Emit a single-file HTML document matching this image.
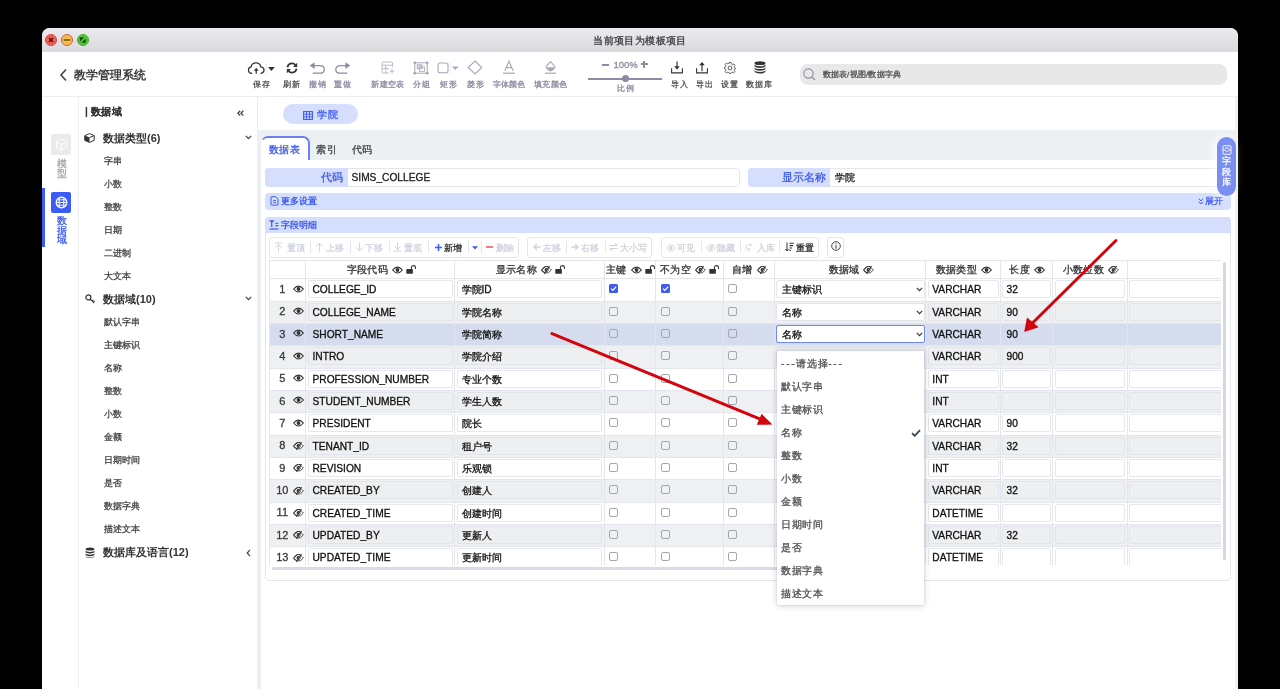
<!DOCTYPE html>
<html><head><meta charset="utf-8">
<style>
*{box-sizing:border-box;margin:0;padding:0}
html,body{width:1280px;height:689px;overflow:hidden;background:#000;font-family:"Liberation Sans",sans-serif;color:#333}
#P div{-webkit-text-stroke:0.3px currentColor}
#P div.navh,#P div[style*="bold"]{-webkit-text-stroke:0}
.a{position:absolute;white-space:nowrap}
#win{position:absolute;left:42px;top:28px;width:1196px;height:700px;background:#fff;border-radius:8px 8px 0 0;overflow:hidden}
#P{position:absolute;left:0;top:0;width:1280px;height:689px;overflow:hidden;will-change:transform}
.tl{position:absolute;top:34px;width:12px;height:12px;border-radius:50%}
.tbi{position:absolute;top:60px;width:16px;height:14px}
.tbl{position:absolute;top:79px;font-size:8px;letter-spacing:1px;padding-left:1px;line-height:10px;color:#8e8aa3;text-align:center;white-space:nowrap}
.nav{position:absolute;left:104px;font-size:9px;color:#444;line-height:12px;white-space:nowrap}
.navh{position:absolute;left:103px;font-size:11px;font-weight:bold;color:#333;line-height:14px;white-space:nowrap}
</style></head><body>
<div id="win"></div>
<div id="P">
  <!-- title bar -->
  <div class="a" style="left:42px;top:28px;width:1196px;height:24px;border-radius:8px 8px 0 0;background:linear-gradient(#eaeaef,#d9d9de)"></div>
  <div class="tl" style="left:45px;background:#ee5f58;border:1px solid #d9473f"></div>
  <div class="tl" style="left:61px;background:#f5bd4f;border:1px solid #e15b3f"></div>
  <div class="tl" style="left:76.5px;background:#55c43c;border:1px solid #3fae2e"></div>
  <div class="a" style="left:42px;width:1196px;top:33.5px;text-align:center;font-size:10px;letter-spacing:0.35px;color:#3a3a3a;line-height:14px">当前项目为模板项目</div>

  <!-- header -->
  <div class="a" style="left:42px;top:96px;width:1196px;height:1px;background:#eeeef2"></div>
  <svg class="a" style="left:59px;top:68px" width="9" height="14" viewBox="0 0 9 14"><path d="M7 1.5 L2 7 L7 12.5" fill="none" stroke="#444" stroke-width="1.6"/></svg>
  <div class="a" style="left:74px;top:67.5px;font-size:11.8px;font-weight:bold;color:#3d3d3d;line-height:15px">教学管理系统</div>


  <!-- toolbar -->
  <svg class="a" style="left:247px;top:60.6px" width="30" height="15" viewBox="0 0 30 15">
    <path d="M4.8 12.3 C2.6 12.1 1.5 10.5 1.5 8.9 C1.5 7.3 2.6 6.1 4.1 5.9 C4.5 3.4 6.6 1.9 9 1.9 C11.5 1.9 13.4 3.6 13.8 5.9 C15.8 6.1 17 7.5 17 9.1 C17 10.6 15.9 12.1 13.9 12.3" fill="none" stroke="#333" stroke-width="1.25" stroke-linecap="round"/>
    <path d="M9.25 12.7 V8.6" stroke="#333" stroke-width="1.25"/>
    <path d="M6.9 9.7 L9.25 6.8 L11.6 9.7 Z" fill="#333"/>
    <rect x="18.6" y="1.8" width="0.9" height="11.4" fill="#e3e4ee"/>
    <path d="M21 6 H27.8 L24.4 10.1 Z" fill="#333"/>
  </svg>
  <svg class="a" style="left:285px;top:61px" width="14" height="14" viewBox="0 0 14 14">
    <path d="M2.5 6.3 C2.9 3.9 4.7 2.4 7 2.4 C8.5 2.4 9.7 3 10.5 4" fill="none" stroke="#333" stroke-width="1.8"/>
    <path d="M12.2 1.8 V6.1 H7.9 Z" fill="#333"/>
    <path d="M11.5 7.7 C11.1 10.1 9.3 11.6 7 11.6 C5.5 11.6 4.3 11 3.5 10" fill="none" stroke="#333" stroke-width="1.8"/>
    <path d="M1.8 12.2 V7.9 H6.1 Z" fill="#333"/>
  </svg>
  <svg class="a" style="left:309px;top:61px" width="17" height="14" viewBox="0 0 17 14">
    <path d="M2.5 4.6 H10.8 C13.4 4.6 15.2 6.3 15.2 8.4 C15.2 10.5 13.4 12.2 10.8 12.2 H3.7" fill="none" stroke="#8e8aa3" stroke-width="1.3"/>
    <path d="M0.8 4.6 L5.6 1.2 V8 Z" fill="#8e8aa3"/>
  </svg>
  <svg class="a" style="left:334px;top:61px" width="17" height="14" viewBox="0 0 17 14">
    <path d="M14.5 4.6 H6.2 C3.6 4.6 1.8 6.3 1.8 8.4 C1.8 10.5 3.6 12.2 6.2 12.2 H13.3" fill="none" stroke="#8e8aa3" stroke-width="1.3"/>
    <path d="M16.2 4.6 L11.4 1.2 V8 Z" fill="#8e8aa3"/>
  </svg>

  <svg class="a" style="left:381px;top:61px" width="14" height="13" viewBox="0 0 14 13">
    <path d="M11.5 6 V2 C11.5 1.4 11.1 1 10.5 1 H2 C1.4 1 1 1.4 1 2 V11 C1 11.6 1.4 12 2 12 H7.5" fill="none" stroke="#bdbbc8" stroke-width="1"/>
    <path d="M1 4.2 H11.5 M1 7.6 H8 M4.8 4.2 V12" fill="none" stroke="#bdbbc8" stroke-width="1"/>
    <path d="M11 8 V12.6 M8.7 10.3 H13.3" stroke="#bdbbc8" stroke-width="1.1"/>
  </svg>
  <svg class="a" style="left:413px;top:61px" width="16" height="14" viewBox="0 0 16 14">
    <rect x="1.8" y="1.8" width="12.4" height="10.4" fill="none" stroke="#a9a6b8" stroke-width="1"/>
    <circle cx="1.8" cy="1.8" r="1.4" fill="#a9a6b8"/><circle cx="14.2" cy="1.8" r="1.4" fill="#a9a6b8"/><circle cx="1.8" cy="12.2" r="1.4" fill="#a9a6b8"/><circle cx="14.2" cy="12.2" r="1.4" fill="#a9a6b8"/>
    <rect x="4.2" y="3.8" width="5" height="4" fill="#d8d6e0" stroke="#a9a6b8" stroke-width="0.8"/>
    <rect x="6.6" y="6" width="5" height="4.4" fill="none" stroke="#a9a6b8" stroke-width="0.8"/>
  </svg>
  <svg class="a" style="left:437px;top:61px" width="23" height="14" viewBox="0 0 23 14">
    <rect x="1" y="2" width="10" height="9.8" rx="2" fill="none" stroke="#a9a6b8" stroke-width="1.1"/>
    <rect x="12.8" y="1.5" width="0.8" height="11" fill="#e4e4ec"/>
    <path d="M15 5.6 H21.6 L18.3 9 Z" fill="#a9a6b8"/>
  </svg>
  <svg class="a" style="left:467px;top:60px" width="16" height="15" viewBox="0 0 16 15">
    <path d="M8 1 L14.8 7.5 L8 14 L1.2 7.5 Z" fill="none" stroke="#a9a6b8" stroke-width="1.1"/>
  </svg>
  <svg class="a" style="left:502px;top:60px" width="14" height="15" viewBox="0 0 14 15">
    <path d="M2.8 11 L7 1.2 L11.2 11 M4.3 7.6 H9.7" fill="none" stroke="#a9a6b8" stroke-width="1.1"/>
    <rect x="1" y="12.6" width="12" height="1.2" fill="#a9a6b8"/>
  </svg>
  <svg class="a" style="left:544px;top:60px" width="13" height="15" viewBox="0 0 13 15">
    <path d="M6.5 1.5 L10.5 6.2 C11 6.8 11 7.6 10.5 8.2 L8 10.4 C7.2 11 5.8 11 5 10.4 L2.5 8.2 C2 7.6 2 6.8 2.5 6.2 Z" fill="none" stroke="#a9a6b8" stroke-width="1.1"/>
    <path d="M2.3 7.3 H10.7 L8 10.4 C7.2 11 5.8 11 5 10.4 Z" fill="#a9a6b8"/>
    <rect x="1" y="12.6" width="11" height="1.2" fill="#a9a6b8"/>
  </svg>

  <!-- zoom -->
  <div class="a" style="left:602.4px;top:63.6px;width:6.6px;height:2.1px;background:#8e8aa3"></div>
  <div class="a" style="left:613.5px;top:59px;font-size:9.5px;color:#8e8aa3;line-height:11px">100%</div>
  <div class="a" style="left:640.9px;top:63.4px;width:7px;height:2.1px;background:#8e8aa3"></div>
  <div class="a" style="left:643.4px;top:60.9px;width:2.1px;height:7px;background:#8e8aa3"></div>
  <div class="a" style="left:588px;top:78px;width:74px;height:2px;background:#8e8aa3"></div>
  <div class="a" style="left:621.5px;top:75px;width:7px;height:7px;border-radius:50%;background:#8e8aa3"></div>

  <svg class="a" style="left:670px;top:61px" width="14" height="13" viewBox="0 0 14 13">
    <path d="M1.6 7.2 V11.9 H12.4 V7.2" fill="none" stroke="#333" stroke-width="1.1"/>
    <path d="M7 0.6 V7.5" stroke="#333" stroke-width="1.2"/><path d="M4.2 5.2 L7 8.6 L9.8 5.2 Z" fill="#333"/>
  </svg>
  <svg class="a" style="left:695px;top:61px" width="14" height="13" viewBox="0 0 14 13">
    <path d="M1.6 7.2 V11.9 H12.4 V7.2" fill="none" stroke="#333" stroke-width="1.1"/>
    <path d="M7 3.2 V10.2" stroke="#333" stroke-width="1.2"/><path d="M4.2 4.3 L7 0.9 L9.8 4.3 Z" fill="#333"/>
  </svg>
  <svg class="a" style="left:723.5px;top:61.5px" width="12" height="12" viewBox="0 0 12 12">
    <path d="M5 0.6 H7 L7.3 2 L8.5 2.6 L9.8 1.9 L11 3.3 L10.2 4.5 L10.6 5.6 L11.4 6 V6.9 L10.6 7.2 L10.2 8.4 L10.9 9.6 L9.6 10.9 L8.4 10.2 L7.2 10.7 L6.9 11.4 H5.1 L4.8 10.7 L3.6 10.2 L2.4 10.9 L1.1 9.6 L1.8 8.4 L1.4 7.2 L0.6 6.9 V5.1 L1.4 4.8 L1.8 3.6 L1.1 2.4 L2.4 1.1 L3.6 1.8 L4.8 1.4 Z" fill="none" stroke="#444" stroke-width="0.85" stroke-linejoin="round"/>
    <circle cx="6" cy="6" r="1.9" fill="none" stroke="#444" stroke-width="0.85"/>
  </svg>
  <svg class="a" style="left:753.5px;top:61px" width="12" height="13" viewBox="0 0 12 13">
    <ellipse cx="6" cy="2.2" rx="5.5" ry="1.9" fill="#333"/>
    <path d="M0.5 3.6 C0.9 4.6 3.2 5.3 6 5.3 C8.8 5.3 11.1 4.6 11.5 3.6 V5 C11.5 6.1 9 6.9 6 6.9 C3 6.9 0.5 6.1 0.5 5 Z" fill="#333"/>
    <path d="M0.5 6.4 C0.9 7.4 3.2 8.1 6 8.1 C8.8 8.1 11.1 7.4 11.5 6.4 V7.8 C11.5 8.9 9 9.7 6 9.7 C3 9.7 0.5 8.9 0.5 7.8 Z" fill="#333"/>
    <path d="M0.5 9.2 C0.9 10.2 3.2 10.9 6 10.9 C8.8 10.9 11.1 10.2 11.5 9.2 V10.6 C11.5 11.7 9 12.5 6 12.5 C3 12.5 0.5 11.7 0.5 10.6 Z" fill="#333"/>
  </svg>

  <div class="tbl" style="left:241.7px;top:80px;width:40px;color:#555">保存</div>
  <div class="tbl" style="left:271.7px;top:80px;width:40px;color:#555">刷新</div>
  <div class="tbl" style="left:297.0px;top:80px;width:40px">撤销</div>
  <div class="tbl" style="left:322.0px;top:80px;width:40px">重做</div>
  <div class="tbl" style="left:367.8px;top:80px;width:40px;letter-spacing:0.2px;padding-left:0.2px">新建空表</div>
  <div class="tbl" style="left:401.5px;top:80px;width:40px">分组</div>
  <div class="tbl" style="left:428.5px;top:80px;width:40px">矩形</div>
  <div class="tbl" style="left:455.9px;top:80px;width:40px">菱形</div>
  <div class="tbl" style="left:488.9px;top:80px;width:40px;letter-spacing:0.2px;padding-left:0.2px">字体颜色</div>
  <div class="tbl" style="left:530.5px;top:80px;width:40px;letter-spacing:0.2px;padding-left:0.2px">填充颜色</div>
  <div class="tbl" style="left:605.0px;top:83.5px;width:40px">比例</div>
  <div class="tbl" style="left:659.3px;top:79.5px;width:40px;color:#555">导入</div>
  <div class="tbl" style="left:684.5px;top:79.5px;width:40px;color:#555">导出</div>
  <div class="tbl" style="left:709.7px;top:79.5px;width:40px;color:#555">设置</div>
  <div class="tbl" style="left:739.2px;top:79.5px;width:40px;color:#555">数据库</div>
  <!-- search -->
  <div class="a" style="left:800px;top:64px;width:427px;height:21px;border-radius:8px;background:#e8e8e8"></div>
  <svg class="a" style="left:803px;top:68px" width="13" height="13" viewBox="0 0 13 13"><circle cx="5.5" cy="5.5" r="4.6" fill="none" stroke="#8f8aa8" stroke-width="1.1"/><path d="M9 9 L12 12" stroke="#8f8aa8" stroke-width="1.2"/></svg>
  <div class="a" style="left:822.5px;top:69px;font-size:8px;letter-spacing:0.2px;color:#555;line-height:11px">数据表/视图/数据字典</div>

  <!-- left rail -->
  <div class="a" style="left:78px;top:97px;width:1px;height:592px;background:#f0f0f2"></div>
  <div class="a" style="left:51px;top:134px;width:20px;height:21px;border-radius:2px;background:#ebebeb"></div>
  <div class="a" style="left:56.5px;top:159px;width:10px;font-size:9.5px;line-height:9.5px;color:#a3a3a3;white-space:normal;text-align:center">模型</div>
  <div class="a" style="left:42px;top:188px;width:2.5px;height:59px;background:#3b5cf5"></div>
  <div class="a" style="left:51px;top:192px;width:20px;height:21px;border-radius:2px;background:#3b5cf5"></div>
  <div class="a" style="left:56.5px;top:216px;width:10px;font-size:9.5px;line-height:9.5px;color:#3b5cf5;white-space:normal;text-align:center">数据域</div>


  <svg class="a" style="left:84px;top:133px" width="11" height="10" viewBox="0 0 11 10"><path d="M5.5 0.6 L10.2 2.6 V7.4 L5.5 9.4 L0.8 7.4 V2.6 Z" fill="#fff" stroke="#333" stroke-width="1"/><path d="M0.8 2.6 L5.5 4.6 V9.4 L0.8 7.4 Z" fill="#333"/><path d="M5.5 4.6 L10.2 2.6" stroke="#333" stroke-width="1"/></svg>
  <svg class="a" style="left:84.5px;top:294px" width="11" height="10" viewBox="0 0 11 10"><circle cx="3.4" cy="3.4" r="2.5" fill="none" stroke="#333" stroke-width="1.2"/><path d="M5.2 5.2 L9.2 9.2 M7 7 L8.4 5.8 M8.2 8.2 L9.6 7" fill="none" stroke="#333" stroke-width="1.1"/></svg>
  <svg class="a" style="left:84.5px;top:546.5px" width="10" height="11" viewBox="0 0 10 11"><ellipse cx="5" cy="2" rx="4.4" ry="1.6" fill="#333"/><path d="M0.6 3.3 C0.6 4.3 2.6 5 5 5 C7.4 5 9.4 4.3 9.4 3.3 V4.8 C9.4 5.8 7.4 6.5 5 6.5 C2.6 6.5 0.6 5.8 0.6 4.8 Z" fill="#333"/><path d="M0.6 6 C0.6 7 2.6 7.7 5 7.7 C7.4 7.7 9.4 7 9.4 6 V7.5 C9.4 8.5 7.4 9.2 5 9.2 C2.6 9.2 0.6 8.5 0.6 7.5 Z" fill="#333"/><path d="M0.6 8.7 C0.6 9.7 2.6 10.4 5 10.4 C7.4 10.4 9.4 9.7 9.4 8.7 V9.2 C9.4 10.2 7.4 10.9 5 10.9 C2.6 10.9 0.6 10.2 0.6 9.2 Z" fill="#333"/></svg>
  <svg class="a" style="left:244.5px;top:135.3px" width="7" height="5" viewBox="0 0 7 5"><path d="M0.8 0.9 L3.5 3.7 L6.2 0.9" fill="none" stroke="#444" stroke-width="1.25"/></svg>
  <svg class="a" style="left:244.5px;top:296.3px" width="7" height="5" viewBox="0 0 7 5"><path d="M0.8 0.9 L3.5 3.7 L6.2 0.9" fill="none" stroke="#444" stroke-width="1.25"/></svg>
  <svg class="a" style="left:245.5px;top:549px" width="5" height="8" viewBox="0 0 5 8"><path d="M4 0.9 L1.2 4 L4 7.1" fill="none" stroke="#444" stroke-width="1.25"/></svg>
  <svg class="a" style="left:54.5px;top:138px" width="13" height="13" viewBox="0 0 13 13"><path d="M6.5 1 L11.5 3.8 V9.2 L6.5 12 L1.5 9.2 V3.8 Z M1.5 3.8 L6.5 6.6 L11.5 3.8 M6.5 6.6 V12" fill="none" stroke="#fff" stroke-width="1"/></svg>
  <svg class="a" style="left:54.5px;top:196px" width="13" height="13" viewBox="0 0 13 13"><circle cx="6.5" cy="6.5" r="5.3" fill="none" stroke="#fff" stroke-width="1.3"/><ellipse cx="6.5" cy="6.5" rx="2.4" ry="5.3" fill="none" stroke="#fff" stroke-width="1"/><path d="M1.2 6.5 H11.8 M2 3.8 H11 M2 9.2 H11" stroke="#fff" stroke-width="0.9"/></svg>
  <!-- traffic glyphs -->
  <svg class="a" style="left:45px;top:34px" width="44" height="12" viewBox="0 0 44 12">
    <path d="M4 4 L8 8 M8 4 L4 8" stroke="#5a0a06" stroke-width="1.4"/>
    <path d="M18.6 6 H25.4" stroke="#6b4a0a" stroke-width="1.4"/>
    <path d="M34.8 3.3 H39.2 L34.8 7.7 Z M40.7 8.8 H36.3 L40.7 4.4 Z" fill="#0f4d0a"/>
  </svg>

  <!-- nav panel -->
  <div class="a" style="left:257px;top:97px;width:1px;height:592px;background:#ececf0"></div>
  <div class="a" style="left:85px;top:105px;font-size:10px;letter-spacing:0.3px;font-weight:700;-webkit-text-stroke:0.1px #333;color:#333;line-height:14px">| 数据域</div>
  <svg class="a" style="left:236.5px;top:109.5px" width="7" height="7" viewBox="0 0 7 7"><path d="M3.2 0.8 L0.9 3.2 L3.2 5.6 M6.3 0.8 L4 3.2 L6.3 5.6" fill="none" stroke="#444" stroke-width="1.3"/></svg>

  <div class="navh" style="top:131px">数据类型(6)</div>
  <div class="nav" style="top:154.5px">字串</div>
  <div class="nav" style="top:177.5px">小数</div>
  <div class="nav" style="top:200.5px">整数</div>
  <div class="nav" style="top:223.5px">日期</div>
  <div class="nav" style="top:246.5px">二进制</div>
  <div class="nav" style="top:269.5px">大文本</div>
  <div class="navh" style="top:292px">数据域(10)</div>
  <div class="nav" style="top:315.5px">默认字串</div>
  <div class="nav" style="top:338.5px">主键标识</div>
  <div class="nav" style="top:361.5px">名称</div>
  <div class="nav" style="top:384.5px">整数</div>
  <div class="nav" style="top:407.5px">小数</div>
  <div class="nav" style="top:430.5px">金额</div>
  <div class="nav" style="top:453.5px">日期时间</div>
  <div class="nav" style="top:476.5px">是否</div>
  <div class="nav" style="top:499.5px">数据字典</div>
  <div class="nav" style="top:522.5px">描述文本</div>
  <div class="navh" style="top:545px">数据库及语言(12)</div>

<!--MAIN-->
<div class="a" style="left:283px;top:103.5px;width:74.5px;height:20px;border-radius:10px;background:#d5defc"></div>
<svg class="a" style="left:302.5px;top:110.5px" width="10" height="9" viewBox="0 0 10 9"><rect x="0.6" y="0.6" width="8.8" height="7.8" fill="none" stroke="#3d5af1" stroke-width="1.1"/><path d="M0.6 3.2 H9.4 M0.6 5.8 H9.4 M3.5 0.6 V8.4 M6.5 0.6 V8.4" stroke="#3d5af1" stroke-width="0.9"/></svg>
<div class="a" style="left:317px;top:108px;font-size:10px;letter-spacing:0.6px;line-height:13px;color:#3d5af1">学院</div>
<div class="a" style="left:258px;top:130px;width:980px;height:30px;background:#edf0f2"></div>
<div class="a" style="left:257px;top:130px;width:4.2px;height:559px;background:#edf0f2"></div>
<div class="a" style="left:1235.2px;top:97px;width:2.8px;height:592px;background:#f1f2f4"></div>
<div class="a" style="left:261px;top:135.6px;width:48.5px;height:24.5px;background:#fff;border-radius:7px 7px 0 0;border-top:2px solid #6a80f4;border-right:2px solid #6a80f4;border-left:1px solid rgba(106,128,244,0)"></div>
<div class="a" style="left:268.5px;top:143px;font-size:10px;letter-spacing:0.6px;line-height:13px;color:#3d5af1">数据表</div>
<div class="a" style="left:316px;top:143px;font-size:10px;letter-spacing:0.6px;line-height:13px;color:#444">索引</div>
<div class="a" style="left:351.5px;top:143px;font-size:10px;letter-spacing:0.6px;line-height:13px;color:#444">代码</div>
<div class="a" style="left:265px;top:168px;width:475px;height:18.5px;border-radius:4px;border:1px solid #e3e6f0;background:#fff"></div>
<div class="a" style="left:265px;top:168px;width:82.5px;height:18.5px;border-radius:4px 0 0 4px;background:#d5defc"></div>
<div class="a" style="left:265px;top:171px;width:78px;text-align:right;font-size:10.5px;line-height:13px;color:#3d5af1">代码</div>
<div class="a" style="left:351.5px;top:171px;font-size:10.2px;line-height:13px;color:#222">SIMS_COLLEGE</div>
<div class="a" style="left:748px;top:168px;width:483px;height:18.5px;border-radius:4px;border:1px solid #e3e6f0;background:#fff"></div>
<div class="a" style="left:748px;top:168px;width:82px;height:18.5px;border-radius:4px 0 0 4px;background:#d5defc"></div>
<div class="a" style="left:748px;top:171px;width:78px;text-align:right;font-size:10.5px;line-height:13px;color:#3d5af1">显示名称</div>
<div class="a" style="left:834.5px;top:171px;font-size:10px;line-height:13px;color:#222">学院</div>
<div class="a" style="left:265px;top:192.6px;width:966px;height:17.2px;border-radius:4px;background:#d5defc"></div>
<svg class="a" style="left:269.5px;top:196.2px" width="9" height="10" viewBox="0 0 9 10"><path d="M1 1.2 C1 0.9 1.2 0.7 1.5 0.7 H5.6 L8 3.1 V8.6 C8 8.9 7.8 9.1 7.5 9.1 H1.5 C1.2 9.1 1 8.9 1 8.6 Z" fill="none" stroke="#3d5af1" stroke-width="1"/><path d="M3 4.6 H6 M3 6.6 H6" stroke="#3d5af1" stroke-width="0.9"/></svg>
<div class="a" style="left:281px;top:196.3px;font-size:9px;line-height:11px;font-weight:bold;color:#3d5af1">更多设置</div>
<svg class="a" style="left:1198px;top:198px" width="6" height="7" viewBox="0 0 6 7"><path d="M0.8 0.8 L3 2.8 L5.2 0.8 M0.8 3.8 L3 5.8 L5.2 3.8" fill="none" stroke="#3d5af1" stroke-width="1"/></svg>
<div class="a" style="left:1205px;top:196px;font-size:9px;line-height:11px;color:#3d5af1">展开</div>
<div class="a" style="left:265px;top:216.5px;width:966px;height:364px;border-radius:4px;border:1px solid #e4e6ee;background:#fff"></div>
<div class="a" style="left:265px;top:216.5px;width:966px;height:16.5px;border-radius:4px 4px 0 0;background:#d5defc"></div>
<svg class="a" style="left:269px;top:220px" width="10" height="10" viewBox="0 0 10 10"><path d="M0.5 1 H5 M2.75 1 V7" stroke="#3d5af1" stroke-width="1.3"/><path d="M6.2 3.2 H9.5 M6.2 5.6 H9.5" stroke="#3d5af1" stroke-width="1.1"/><path d="M0.5 9 H9.5" stroke="#3d5af1" stroke-width="1.2"/></svg>
<div class="a" style="left:281px;top:219.5px;font-size:9px;line-height:11px;font-weight:bold;color:#3d5af1">字段明细</div>
<div class="a" style="left:269.4px;top:237.3px;width:250.1px;height:20.3px;border:1px solid #e3e6ee;border-radius:3px"></div>
<div class="a" style="left:527.3px;top:237.3px;width:124.7px;height:20.3px;border:1px solid #e3e6ee;border-radius:3px"></div>
<div class="a" style="left:660.5px;top:237.3px;width:158.6px;height:20.3px;border:1px solid #e3e6ee;border-radius:3px"></div>
<div class="a" style="left:827.2px;top:237.3px;width:17.1px;height:20.3px;border:1px solid #e3e6ee;border-radius:3px"></div>
<div class="a" style="left:309.8px;top:241px;width:1px;height:12px;background:#e3e6ee"></div>
<div class="a" style="left:349.5px;top:241px;width:1px;height:12px;background:#e3e6ee"></div>
<div class="a" style="left:388.7px;top:241px;width:1px;height:12px;background:#e3e6ee"></div>
<div class="a" style="left:428.3px;top:241px;width:1px;height:12px;background:#e3e6ee"></div>
<div class="a" style="left:467.5px;top:241px;width:1px;height:12px;background:#e3e6ee"></div>
<div class="a" style="left:481.2px;top:241px;width:1px;height:12px;background:#e3e6ee"></div>
<div class="a" style="left:565.6px;top:241px;width:1px;height:12px;background:#e3e6ee"></div>
<div class="a" style="left:604.5px;top:241px;width:1px;height:12px;background:#e3e6ee"></div>
<div class="a" style="left:700.7px;top:241px;width:1px;height:12px;background:#e3e6ee"></div>
<div class="a" style="left:740.0px;top:241px;width:1px;height:12px;background:#e3e6ee"></div>
<div class="a" style="left:779.3px;top:241px;width:1px;height:12px;background:#e3e6ee"></div>
<svg class="a" style="left:274px;top:242px" width="9" height="10" viewBox="0 0 9 10"><path d="M0.5 1 H8.5 M4.5 2.5 V9.5 M1.5 5.5 L4.5 2.5 L7.5 5.5" fill="none" stroke="#cfd3de" stroke-width="1"/></svg>
<div class="a" style="left:286.5px;top:243.0px;font-size:9px;line-height:11px;color:#cfd3de">置顶</div>
<svg class="a" style="left:314.5px;top:242px" width="9" height="10" viewBox="0 0 9 10"><path d="M4.5 1 V9.5 M1 4.5 L4.5 1 L8 4.5" fill="none" stroke="#cfd3de" stroke-width="1"/></svg>
<div class="a" style="left:325.5px;top:243.0px;font-size:9px;line-height:11px;color:#cfd3de">上移</div>
<svg class="a" style="left:354.5px;top:242px" width="9" height="10" viewBox="0 0 9 10"><path d="M4.5 0.5 V9 M1 5.5 L4.5 9 L8 5.5" fill="none" stroke="#cfd3de" stroke-width="1"/></svg>
<div class="a" style="left:365.0px;top:243.0px;font-size:9px;line-height:11px;color:#cfd3de">下移</div>
<svg class="a" style="left:393px;top:242px" width="9" height="10" viewBox="0 0 9 10"><path d="M0.5 9 H8.5 M4.5 0.5 V7.5 M1.5 4.5 L4.5 7.5 L7.5 4.5" fill="none" stroke="#cfd3de" stroke-width="1"/></svg>
<div class="a" style="left:404.0px;top:243.0px;font-size:9px;line-height:11px;color:#cfd3de">置底</div>
<svg class="a" style="left:434.5px;top:243.5px" width="7" height="7" viewBox="0 0 7 7"><path d="M3.5 0 V7 M0 3.5 H7" stroke="#3d5af1" stroke-width="1.6"/></svg>
<div class="a" style="left:444.0px;top:243.0px;font-size:9px;line-height:11px;color:#333">新增</div>
<svg class="a" style="left:472px;top:246px" width="6" height="4" viewBox="0 0 6 4"><path d="M0 0.3 H6 L3 3.5 Z" fill="#3d5af1"/></svg>
<div class="a" style="left:486px;top:246.4px;width:7px;height:1.6px;background:#f47c8a"></div>
<div class="a" style="left:495.5px;top:243.0px;font-size:9px;line-height:11px;color:#cfd3de">删除</div>
<svg class="a" style="left:532.5px;top:243px" width="8" height="8" viewBox="0 0 8 8"><path d="M7.5 4 H1 M4 1 L1 4 L4 7" fill="none" stroke="#cfd3de" stroke-width="1.4"/></svg>
<div class="a" style="left:543.0px;top:243.0px;font-size:9px;line-height:11px;color:#cfd3de">左移</div>
<svg class="a" style="left:570.5px;top:243px" width="8" height="8" viewBox="0 0 8 8"><path d="M0.5 4 H7 M4 1 L7 4 L4 7" fill="none" stroke="#cfd3de" stroke-width="1.4"/></svg>
<div class="a" style="left:581.0px;top:243.0px;font-size:9px;line-height:11px;color:#cfd3de">右移</div>
<svg class="a" style="left:609px;top:243px" width="9" height="8" viewBox="0 0 9 8"><path d="M0.5 2.5 H8 M6 0.5 L8 2.5 M8.5 5.5 H1 M3 7.5 L1 5.5" fill="none" stroke="#cfd3de" stroke-width="1.2"/></svg>
<div class="a" style="left:620.0px;top:243.0px;font-size:9px;line-height:11px;color:#cfd3de">大小写</div>
<svg class="a" style="left:666.0px;top:243.5px" width="10" height="8" viewBox="0 0 10 8"><path d="M0.5 4 C2 1.5 3.5 0.8 5 0.8 C6.5 0.8 8 1.5 9.5 4 C8 6.5 6.5 7.2 5 7.2 C3.5 7.2 2 6.5 0.5 4 Z" fill="none" stroke="#cfd3de" stroke-width="0.9"/><circle cx="5" cy="4" r="1.9" fill="#cfd3de"/></svg>
<div class="a" style="left:677.3px;top:243.0px;font-size:9px;line-height:11px;color:#cfd3de">可见</div>
<svg class="a" style="left:705.5px;top:243.5px" width="10" height="8" viewBox="0 0 10 8"><path d="M0.5 4 C2 1.5 3.5 0.8 5 0.8 C6.5 0.8 8 1.5 9.5 4 C8 6.5 6.5 7.2 5 7.2 C3.5 7.2 2 6.5 0.5 4 Z" fill="none" stroke="#cfd3de" stroke-width="0.9"/><circle cx="5" cy="4" r="1.6" fill="none" stroke="#cfd3de" stroke-width="0.9"/><path d="M7.2 0.3 L3 7.7" stroke="#cfd3de" stroke-width="1"/></svg>
<div class="a" style="left:717.0px;top:243.0px;font-size:9px;line-height:11px;color:#cfd3de">隐藏</div>
<svg class="a" style="left:744.5px;top:242.5px" width="9" height="9" viewBox="0 0 9 9"><path d="M2 7.5 C0.5 6.5 0.4 4.2 1.5 2.8 C2.6 1.4 4.6 1 6.2 1.8 M5 0.5 L6.6 1.9 L5.2 3.5 M4 8.5 V5 M2.8 6.3 L4 5 L5.2 6.3" fill="none" stroke="#cfd3de" stroke-width="0.9"/></svg>
<div class="a" style="left:756.6px;top:243.0px;font-size:9px;line-height:11px;color:#cfd3de">入库</div>
<svg class="a" style="left:784.5px;top:242px" width="9" height="10" viewBox="0 0 9 10"><path d="M2 0.5 V9 M0.3 7 L2 9 L3.7 7" fill="none" stroke="#333" stroke-width="1"/><path d="M4.5 1.2 H8.8 M4.5 3.6 H8 M4.5 6 H7 M4.5 8.4 H6" stroke="#333" stroke-width="1.1"/></svg>
<div class="a" style="left:795.6px;top:243.0px;font-size:9px;line-height:11px;color:#333">重置</div>
<svg class="a" style="left:831px;top:241px" width="10" height="10" viewBox="0 0 10 10"><circle cx="5" cy="5" r="4.3" fill="none" stroke="#333" stroke-width="0.9"/><rect x="4.5" y="4.2" width="1" height="3.6" fill="#333"/><rect x="4.5" y="2.3" width="1" height="1" fill="#333"/></svg>
<div class="a" style="left:269.5px;top:260.00px;width:951px;height:18.30px;background:#fff"></div>
<div class="a" style="left:269.5px;top:278.30px;width:951px;height:22.33px;background:#fff;border-top:1px solid #e3e6ee"></div>
<div class="a" style="left:269.5px;top:300.63px;width:951px;height:22.33px;background:#eff0f2;border-top:1px solid #e3e6ee"></div>
<div class="a" style="left:269.5px;top:322.96px;width:951px;height:22.33px;background:#d4dcee;border-top:1px solid #e3e6ee"></div>
<div class="a" style="left:269.5px;top:345.29px;width:951px;height:22.33px;background:#eff0f2;border-top:1px solid #e3e6ee"></div>
<div class="a" style="left:269.5px;top:367.62px;width:951px;height:22.33px;background:#fff;border-top:1px solid #e3e6ee"></div>
<div class="a" style="left:269.5px;top:389.95px;width:951px;height:22.33px;background:#eff0f2;border-top:1px solid #e3e6ee"></div>
<div class="a" style="left:269.5px;top:412.28px;width:951px;height:22.33px;background:#fff;border-top:1px solid #e3e6ee"></div>
<div class="a" style="left:269.5px;top:434.61px;width:951px;height:22.33px;background:#eff0f2;border-top:1px solid #e3e6ee"></div>
<div class="a" style="left:269.5px;top:456.94px;width:951px;height:22.33px;background:#fff;border-top:1px solid #e3e6ee"></div>
<div class="a" style="left:269.5px;top:479.27px;width:951px;height:22.33px;background:#eff0f2;border-top:1px solid #e3e6ee"></div>
<div class="a" style="left:269.5px;top:501.60px;width:951px;height:22.33px;background:#fff;border-top:1px solid #e3e6ee"></div>
<div class="a" style="left:269.5px;top:523.93px;width:951px;height:22.33px;background:#eff0f2;border-top:1px solid #e3e6ee"></div>
<div class="a" style="left:269.5px;top:546.26px;width:951px;height:22.33px;background:#fff;border-top:1px solid #e3e6ee"></div>
<div class="a" style="left:268.9px;top:260.00px;width:1px;height:308.59px;background:#e3e6ee"></div>
<div class="a" style="left:305.4px;top:260.00px;width:1px;height:308.59px;background:#e3e6ee"></div>
<div class="a" style="left:454.3px;top:260.00px;width:1px;height:308.59px;background:#e3e6ee"></div>
<div class="a" style="left:603.6px;top:260.00px;width:1px;height:308.59px;background:#e3e6ee"></div>
<div class="a" style="left:655.4px;top:260.00px;width:1px;height:308.59px;background:#e3e6ee"></div>
<div class="a" style="left:722.6px;top:260.00px;width:1px;height:308.59px;background:#e3e6ee"></div>
<div class="a" style="left:774.2px;top:260.00px;width:1px;height:308.59px;background:#e3e6ee"></div>
<div class="a" style="left:925.3px;top:260.00px;width:1px;height:308.59px;background:#e3e6ee"></div>
<div class="a" style="left:999.5px;top:260.00px;width:1px;height:308.59px;background:#e3e6ee"></div>
<div class="a" style="left:1051.9px;top:260.00px;width:1px;height:308.59px;background:#e3e6ee"></div>
<div class="a" style="left:1126.5px;top:260.00px;width:1px;height:308.59px;background:#e3e6ee"></div>
<div class="a" style="left:269.5px;top:260.00px;width:951px;height:1px;background:#e3e6ee"></div>
<div class="a" style="left:306.0px;top:263.0px;width:149.0px;text-align:center;font-size:10px;letter-spacing:0.3px;line-height:13px;color:#333;padding-left:2px">字段代码<svg style="vertical-align:-1px;margin-left:4px" width="11" height="8" viewBox="0 0 11 8"><path d="M0.6 4 Q5.5 -1.9 10.4 4 Q5.5 9.9 0.6 4 Z" fill="none" stroke="#333" stroke-width="1.15"/><circle cx="5.5" cy="4" r="1.9" fill="#333"/></svg><svg style="vertical-align:-1px;margin-left:3px" width="10" height="9" viewBox="0 0 10 9"><rect x="0.3" y="4.1" width="6.6" height="4.6" rx="0.6" fill="#333"/><path d="M5.4 4.2 V2.7 C5.4 1.4 6.3 0.6 7.45 0.6 C8.6 0.6 9.5 1.4 9.5 2.7 V4" fill="none" stroke="#333" stroke-width="1.05"/></svg></div>
<div class="a" style="left:455.0px;top:263.0px;width:149.0px;text-align:center;font-size:10px;letter-spacing:0.3px;line-height:13px;color:#333;padding-left:2px">显示名称<svg style="vertical-align:-1px;margin-left:4px" width="11" height="8" viewBox="0 0 11 8"><path d="M3.9 6.8 Q2 6.1 0.6 4 Q5.5 -1.9 7.6 1.5" fill="none" stroke="#333" stroke-width="1.15"/><path d="M8.3 2.2 Q9.5 2.9 10.4 4 Q7.5 7.6 4.9 7.1" fill="none" stroke="#555" stroke-width="1"/><path d="M3.6 4 C3.6 3 4.4 2.1 5.5 2.1 C5.9 2.1 6.2 2.2 6.5 2.3 L4.3 5.6 C3.9 5.2 3.6 4.6 3.6 4 Z" fill="#333"/><path d="M7.4 3.6 C7.5 4.9 6.6 5.9 5.6 5.9" fill="none" stroke="#555" stroke-width="0.9"/><path d="M8.5 0.2 L3.5 7.8" stroke="#333" stroke-width="1.3"/></svg><svg style="vertical-align:-1px;margin-left:3px" width="10" height="9" viewBox="0 0 10 9"><rect x="0.3" y="4.1" width="6.6" height="4.6" rx="0.6" fill="#333"/><path d="M5.4 4.2 V2.7 C5.4 1.4 6.3 0.6 7.45 0.6 C8.6 0.6 9.5 1.4 9.5 2.7 V4" fill="none" stroke="#333" stroke-width="1.05"/></svg></div>
<div class="a" style="left:604.0px;top:263.0px;width:52.0px;text-align:left;font-size:10px;letter-spacing:0.3px;line-height:13px;color:#333;padding-left:2px">主键<svg style="vertical-align:-1px;margin-left:4px" width="11" height="8" viewBox="0 0 11 8"><path d="M0.6 4 Q5.5 -1.9 10.4 4 Q5.5 9.9 0.6 4 Z" fill="none" stroke="#333" stroke-width="1.15"/><circle cx="5.5" cy="4" r="1.9" fill="#333"/></svg><svg style="vertical-align:-1px;margin-left:3px" width="10" height="9" viewBox="0 0 10 9"><rect x="0.3" y="4.1" width="6.6" height="4.6" rx="0.6" fill="#333"/><path d="M5.4 4.2 V2.7 C5.4 1.4 6.3 0.6 7.45 0.6 C8.6 0.6 9.5 1.4 9.5 2.7 V4" fill="none" stroke="#333" stroke-width="1.05"/></svg></div>
<div class="a" style="left:656.0px;top:263.0px;width:67.0px;text-align:left;font-size:10px;letter-spacing:0.3px;line-height:13px;color:#333;padding-left:4px">不为空<svg style="vertical-align:-1px;margin-left:4px" width="11" height="8" viewBox="0 0 11 8"><path d="M3.9 6.8 Q2 6.1 0.6 4 Q5.5 -1.9 7.6 1.5" fill="none" stroke="#333" stroke-width="1.15"/><path d="M8.3 2.2 Q9.5 2.9 10.4 4 Q7.5 7.6 4.9 7.1" fill="none" stroke="#555" stroke-width="1"/><path d="M3.6 4 C3.6 3 4.4 2.1 5.5 2.1 C5.9 2.1 6.2 2.2 6.5 2.3 L4.3 5.6 C3.9 5.2 3.6 4.6 3.6 4 Z" fill="#333"/><path d="M7.4 3.6 C7.5 4.9 6.6 5.9 5.6 5.9" fill="none" stroke="#555" stroke-width="0.9"/><path d="M8.5 0.2 L3.5 7.8" stroke="#333" stroke-width="1.3"/></svg><svg style="vertical-align:-1px;margin-left:3px" width="10" height="9" viewBox="0 0 10 9"><rect x="0.3" y="4.1" width="6.6" height="4.6" rx="0.6" fill="#333"/><path d="M5.4 4.2 V2.7 C5.4 1.4 6.3 0.6 7.45 0.6 C8.6 0.6 9.5 1.4 9.5 2.7 V4" fill="none" stroke="#333" stroke-width="1.05"/></svg></div>
<div class="a" style="left:723.0px;top:263.0px;width:52.0px;text-align:center;font-size:10px;letter-spacing:0.3px;line-height:13px;color:#333;padding-left:2px">自增<svg style="vertical-align:-1px;margin-left:4px" width="11" height="8" viewBox="0 0 11 8"><path d="M3.9 6.8 Q2 6.1 0.6 4 Q5.5 -1.9 7.6 1.5" fill="none" stroke="#333" stroke-width="1.15"/><path d="M8.3 2.2 Q9.5 2.9 10.4 4 Q7.5 7.6 4.9 7.1" fill="none" stroke="#555" stroke-width="1"/><path d="M3.6 4 C3.6 3 4.4 2.1 5.5 2.1 C5.9 2.1 6.2 2.2 6.5 2.3 L4.3 5.6 C3.9 5.2 3.6 4.6 3.6 4 Z" fill="#333"/><path d="M7.4 3.6 C7.5 4.9 6.6 5.9 5.6 5.9" fill="none" stroke="#555" stroke-width="0.9"/><path d="M8.5 0.2 L3.5 7.8" stroke="#333" stroke-width="1.3"/></svg></div>
<div class="a" style="left:775.0px;top:263.0px;width:151.0px;text-align:center;font-size:10px;letter-spacing:0.3px;line-height:13px;color:#333;padding-left:2px">数据域<svg style="vertical-align:-1px;margin-left:4px" width="11" height="8" viewBox="0 0 11 8"><path d="M3.9 6.8 Q2 6.1 0.6 4 Q5.5 -1.9 7.6 1.5" fill="none" stroke="#333" stroke-width="1.15"/><path d="M8.3 2.2 Q9.5 2.9 10.4 4 Q7.5 7.6 4.9 7.1" fill="none" stroke="#555" stroke-width="1"/><path d="M3.6 4 C3.6 3 4.4 2.1 5.5 2.1 C5.9 2.1 6.2 2.2 6.5 2.3 L4.3 5.6 C3.9 5.2 3.6 4.6 3.6 4 Z" fill="#333"/><path d="M7.4 3.6 C7.5 4.9 6.6 5.9 5.6 5.9" fill="none" stroke="#555" stroke-width="0.9"/><path d="M8.5 0.2 L3.5 7.8" stroke="#333" stroke-width="1.3"/></svg></div>
<div class="a" style="left:926.0px;top:263.0px;width:74.0px;text-align:center;font-size:10px;letter-spacing:0.3px;line-height:13px;color:#333;padding-left:2px">数据类型<svg style="vertical-align:-1px;margin-left:4px" width="11" height="8" viewBox="0 0 11 8"><path d="M0.6 4 Q5.5 -1.9 10.4 4 Q5.5 9.9 0.6 4 Z" fill="none" stroke="#333" stroke-width="1.15"/><circle cx="5.5" cy="4" r="1.9" fill="#333"/></svg></div>
<div class="a" style="left:1000.0px;top:263.0px;width:52.5px;text-align:center;font-size:10px;letter-spacing:0.3px;line-height:13px;color:#333;padding-left:2px">长度<svg style="vertical-align:-1px;margin-left:4px" width="11" height="8" viewBox="0 0 11 8"><path d="M0.6 4 Q5.5 -1.9 10.4 4 Q5.5 9.9 0.6 4 Z" fill="none" stroke="#333" stroke-width="1.15"/><circle cx="5.5" cy="4" r="1.9" fill="#333"/></svg></div>
<div class="a" style="left:1052.5px;top:263.0px;width:74.5px;text-align:center;font-size:10px;letter-spacing:0.3px;line-height:13px;color:#333;padding-left:2px">小数位数<svg style="vertical-align:-1px;margin-left:4px" width="11" height="8" viewBox="0 0 11 8"><path d="M3.9 6.8 Q2 6.1 0.6 4 Q5.5 -1.9 7.6 1.5" fill="none" stroke="#333" stroke-width="1.15"/><path d="M8.3 2.2 Q9.5 2.9 10.4 4 Q7.5 7.6 4.9 7.1" fill="none" stroke="#555" stroke-width="1"/><path d="M3.6 4 C3.6 3 4.4 2.1 5.5 2.1 C5.9 2.1 6.2 2.2 6.5 2.3 L4.3 5.6 C3.9 5.2 3.6 4.6 3.6 4 Z" fill="#333"/><path d="M7.4 3.6 C7.5 4.9 6.6 5.9 5.6 5.9" fill="none" stroke="#555" stroke-width="0.9"/><path d="M8.5 0.2 L3.5 7.8" stroke="#333" stroke-width="1.3"/></svg></div>
<div class="a" style="left:272.3px;top:282.90px;width:20px;text-align:center;font-size:11px;line-height:13px;color:#3a3a3a">1</div>
<svg class="a" style="left:293px;top:284.60px" width="11" height="8" viewBox="0 0 11 8"><path d="M0.6 4 Q5.5 -1.9 10.4 4 Q5.5 9.9 0.6 4 Z" fill="none" stroke="#333" stroke-width="1.15"/><circle cx="5.5" cy="4" r="1.9" fill="#333"/></svg>
<div class="a" style="left:308.0px;top:280.20px;width:145.3px;height:18.3px;background:#fff;border:1px solid #e5e7ee;border-radius:2px;font-size:10.2px;line-height:17.8px;padding-left:3.5px;color:#111">COLLEGE_ID</div>
<div class="a" style="left:457.0px;top:280.20px;width:145.0px;height:18.3px;background:#fff;border:1px solid #e5e7ee;border-radius:2px;font-size:10.2px;line-height:17.8px;padding-left:3.5px;color:#111">学院ID</div>
<svg class="a" style="left:609.0px;top:284.30px" width="9" height="9" viewBox="0 0 9 9"><rect x="0" y="0" width="9" height="9" rx="1.5" fill="#3d5af1"/><path d="M2 4.6 L3.8 6.4 L7.2 2.6" fill="none" stroke="#fff" stroke-width="1.3"/></svg>
<svg class="a" style="left:660.6px;top:284.30px" width="9" height="9" viewBox="0 0 9 9"><rect x="0" y="0" width="9" height="9" rx="1.5" fill="#3d5af1"/><path d="M2 4.6 L3.8 6.4 L7.2 2.6" fill="none" stroke="#fff" stroke-width="1.3"/></svg>
<div class="a" style="left:728.0px;top:284.30px;width:9px;height:9px;border:1px solid #a3a6b4;border-radius:2px;background:transparent"></div>
<div class="a" style="left:776.3px;top:280.20px;width:148.5px;height:18.3px;background:#fff;border:1px solid #e5e7ee;border-radius:2px;font-size:10.2px;line-height:17.8px;padding-left:4.5px;color:#111">主键标识</div>
<svg class="a" style="left:915.5px;top:287.30px" width="7" height="5" viewBox="0 0 7 5"><path d="M0.8 0.8 L3.5 3.6 L6.2 0.8" fill="none" stroke="#333" stroke-width="1.1"/></svg>
<div class="a" style="left:927.8px;top:280.20px;width:71.0px;height:18.3px;background:#fff;border:1px solid #e5e7ee;border-radius:2px;font-size:10.2px;line-height:17.8px;padding-left:3.5px;color:#111">VARCHAR</div>
<div class="a" style="left:1002.0px;top:280.20px;width:48.5px;height:18.3px;background:#fff;border:1px solid #e5e7ee;border-radius:2px;font-size:10.2px;line-height:17.8px;padding-left:3.5px;color:#111">32</div>
<div class="a" style="left:1054.5px;top:280.20px;width:70.5px;height:18.3px;background:#fff;border:1px solid #e5e7ee;border-radius:2px;font-size:10.2px;line-height:17.8px;padding-left:3.5px;color:#111"></div>
<div class="a" style="left:1129.0px;top:280.20px;width:97.0px;height:18.3px;background:#fff;border:1px solid #e5e7ee;border-radius:2px;font-size:10.2px;line-height:17.8px;padding-left:3.5px;color:#111"></div>
<div class="a" style="left:272.3px;top:305.23px;width:20px;text-align:center;font-size:11px;line-height:13px;color:#3a3a3a">2</div>
<svg class="a" style="left:293px;top:306.93px" width="11" height="8" viewBox="0 0 11 8"><path d="M0.6 4 Q5.5 -1.9 10.4 4 Q5.5 9.9 0.6 4 Z" fill="none" stroke="#333" stroke-width="1.15"/><circle cx="5.5" cy="4" r="1.9" fill="#333"/></svg>
<div class="a" style="left:308.0px;top:302.53px;width:145.3px;height:18.3px;background:#eeeff1;border:1px solid #e2e4ea;border-radius:2px;font-size:10.2px;line-height:17.8px;padding-left:3.5px;color:#111">COLLEGE_NAME</div>
<div class="a" style="left:457.0px;top:302.53px;width:145.0px;height:18.3px;background:#eeeff1;border:1px solid #e2e4ea;border-radius:2px;font-size:10.2px;line-height:17.8px;padding-left:3.5px;color:#111">学院名称</div>
<div class="a" style="left:609.0px;top:306.63px;width:9px;height:9px;border:1px solid #a3a6b4;border-radius:2px;background:transparent"></div>
<div class="a" style="left:660.6px;top:306.63px;width:9px;height:9px;border:1px solid #a3a6b4;border-radius:2px;background:transparent"></div>
<div class="a" style="left:728.0px;top:306.63px;width:9px;height:9px;border:1px solid #a3a6b4;border-radius:2px;background:transparent"></div>
<div class="a" style="left:776.3px;top:302.53px;width:148.5px;height:18.3px;background:#fff;border:1px solid #e2e4ea;border-radius:2px;font-size:10.2px;line-height:17.8px;padding-left:4.5px;color:#111">名称</div>
<svg class="a" style="left:915.5px;top:309.63px" width="7" height="5" viewBox="0 0 7 5"><path d="M0.8 0.8 L3.5 3.6 L6.2 0.8" fill="none" stroke="#333" stroke-width="1.1"/></svg>
<div class="a" style="left:927.8px;top:302.53px;width:71.0px;height:18.3px;background:#eeeff1;border:1px solid #e2e4ea;border-radius:2px;font-size:10.2px;line-height:17.8px;padding-left:3.5px;color:#111">VARCHAR</div>
<div class="a" style="left:1002.0px;top:302.53px;width:48.5px;height:18.3px;background:#eeeff1;border:1px solid #e2e4ea;border-radius:2px;font-size:10.2px;line-height:17.8px;padding-left:3.5px;color:#111">90</div>
<div class="a" style="left:1054.5px;top:302.53px;width:70.5px;height:18.3px;background:#eeeff1;border:1px solid #e2e4ea;border-radius:2px;font-size:10.2px;line-height:17.8px;padding-left:3.5px;color:#111"></div>
<div class="a" style="left:1129.0px;top:302.53px;width:97.0px;height:18.3px;background:#eeeff1;border:1px solid #e2e4ea;border-radius:2px;font-size:10.2px;line-height:17.8px;padding-left:3.5px;color:#111"></div>
<div class="a" style="left:272.3px;top:327.56px;width:20px;text-align:center;font-size:11px;line-height:13px;color:#3a3a3a">3</div>
<svg class="a" style="left:293px;top:329.26px" width="11" height="8" viewBox="0 0 11 8"><path d="M0.6 4 Q5.5 -1.9 10.4 4 Q5.5 9.9 0.6 4 Z" fill="none" stroke="#333" stroke-width="1.15"/><circle cx="5.5" cy="4" r="1.9" fill="#333"/></svg>
<div class="a" style="left:308.0px;top:324.86px;width:145.3px;height:18.3px;background:transparent;border:1px solid transparent;border-radius:2px;font-size:10.2px;line-height:17.8px;padding-left:3.5px;color:#111">SHORT_NAME</div>
<div class="a" style="left:457.0px;top:324.86px;width:145.0px;height:18.3px;background:transparent;border:1px solid transparent;border-radius:2px;font-size:10.2px;line-height:17.8px;padding-left:3.5px;color:#111">学院简称</div>
<div class="a" style="left:609.0px;top:328.96px;width:9px;height:9px;border:1px solid #a3a6b4;border-radius:2px;background:transparent"></div>
<div class="a" style="left:660.6px;top:328.96px;width:9px;height:9px;border:1px solid #a3a6b4;border-radius:2px;background:transparent"></div>
<div class="a" style="left:728.0px;top:328.96px;width:9px;height:9px;border:1px solid #a3a6b4;border-radius:2px;background:transparent"></div>
<div class="a" style="left:776.3px;top:324.86px;width:148.5px;height:18.3px;background:#fff;border:1px solid #6f86f3;border-radius:2px;font-size:10.2px;line-height:17.8px;padding-left:4.5px;color:#111">名称</div>
<svg class="a" style="left:915.5px;top:331.96px" width="7" height="5" viewBox="0 0 7 5"><path d="M0.8 0.8 L3.5 3.6 L6.2 0.8" fill="none" stroke="#333" stroke-width="1.1"/></svg>
<div class="a" style="left:927.8px;top:324.86px;width:71.0px;height:18.3px;background:transparent;border:1px solid transparent;border-radius:2px;font-size:10.2px;line-height:17.8px;padding-left:3.5px;color:#111">VARCHAR</div>
<div class="a" style="left:1002.0px;top:324.86px;width:48.5px;height:18.3px;background:transparent;border:1px solid transparent;border-radius:2px;font-size:10.2px;line-height:17.8px;padding-left:3.5px;color:#111">90</div>
<div class="a" style="left:1054.5px;top:324.86px;width:70.5px;height:18.3px;background:transparent;border:1px solid transparent;border-radius:2px;font-size:10.2px;line-height:17.8px;padding-left:3.5px;color:#111"></div>
<div class="a" style="left:1129.0px;top:324.86px;width:97.0px;height:18.3px;background:transparent;border:1px solid transparent;border-radius:2px;font-size:10.2px;line-height:17.8px;padding-left:3.5px;color:#111"></div>
<div class="a" style="left:272.3px;top:349.89px;width:20px;text-align:center;font-size:11px;line-height:13px;color:#3a3a3a">4</div>
<svg class="a" style="left:293px;top:351.59px" width="11" height="8" viewBox="0 0 11 8"><path d="M0.6 4 Q5.5 -1.9 10.4 4 Q5.5 9.9 0.6 4 Z" fill="none" stroke="#333" stroke-width="1.15"/><circle cx="5.5" cy="4" r="1.9" fill="#333"/></svg>
<div class="a" style="left:308.0px;top:347.19px;width:145.3px;height:18.3px;background:#eeeff1;border:1px solid #e2e4ea;border-radius:2px;font-size:10.2px;line-height:17.8px;padding-left:3.5px;color:#111">INTRO</div>
<div class="a" style="left:457.0px;top:347.19px;width:145.0px;height:18.3px;background:#eeeff1;border:1px solid #e2e4ea;border-radius:2px;font-size:10.2px;line-height:17.8px;padding-left:3.5px;color:#111">学院介绍</div>
<div class="a" style="left:609.0px;top:351.29px;width:9px;height:9px;border:1px solid #a3a6b4;border-radius:2px;background:transparent"></div>
<div class="a" style="left:660.6px;top:351.29px;width:9px;height:9px;border:1px solid #a3a6b4;border-radius:2px;background:transparent"></div>
<div class="a" style="left:728.0px;top:351.29px;width:9px;height:9px;border:1px solid #a3a6b4;border-radius:2px;background:transparent"></div>
<div class="a" style="left:776.3px;top:347.19px;width:148.5px;height:18.3px;background:#fff;border:1px solid #e2e4ea;border-radius:2px"></div>
<div class="a" style="left:927.8px;top:347.19px;width:71.0px;height:18.3px;background:#eeeff1;border:1px solid #e2e4ea;border-radius:2px;font-size:10.2px;line-height:17.8px;padding-left:3.5px;color:#111">VARCHAR</div>
<div class="a" style="left:1002.0px;top:347.19px;width:48.5px;height:18.3px;background:#eeeff1;border:1px solid #e2e4ea;border-radius:2px;font-size:10.2px;line-height:17.8px;padding-left:3.5px;color:#111">900</div>
<div class="a" style="left:1054.5px;top:347.19px;width:70.5px;height:18.3px;background:#eeeff1;border:1px solid #e2e4ea;border-radius:2px;font-size:10.2px;line-height:17.8px;padding-left:3.5px;color:#111"></div>
<div class="a" style="left:1129.0px;top:347.19px;width:97.0px;height:18.3px;background:#eeeff1;border:1px solid #e2e4ea;border-radius:2px;font-size:10.2px;line-height:17.8px;padding-left:3.5px;color:#111"></div>
<div class="a" style="left:272.3px;top:372.22px;width:20px;text-align:center;font-size:11px;line-height:13px;color:#3a3a3a">5</div>
<svg class="a" style="left:293px;top:373.92px" width="11" height="8" viewBox="0 0 11 8"><path d="M0.6 4 Q5.5 -1.9 10.4 4 Q5.5 9.9 0.6 4 Z" fill="none" stroke="#333" stroke-width="1.15"/><circle cx="5.5" cy="4" r="1.9" fill="#333"/></svg>
<div class="a" style="left:308.0px;top:369.52px;width:145.3px;height:18.3px;background:#fff;border:1px solid #e5e7ee;border-radius:2px;font-size:10.2px;line-height:17.8px;padding-left:3.5px;color:#111">PROFESSION_NUMBER</div>
<div class="a" style="left:457.0px;top:369.52px;width:145.0px;height:18.3px;background:#fff;border:1px solid #e5e7ee;border-radius:2px;font-size:10.2px;line-height:17.8px;padding-left:3.5px;color:#111">专业个数</div>
<div class="a" style="left:609.0px;top:373.62px;width:9px;height:9px;border:1px solid #a3a6b4;border-radius:2px;background:transparent"></div>
<div class="a" style="left:660.6px;top:373.62px;width:9px;height:9px;border:1px solid #a3a6b4;border-radius:2px;background:transparent"></div>
<div class="a" style="left:728.0px;top:373.62px;width:9px;height:9px;border:1px solid #a3a6b4;border-radius:2px;background:transparent"></div>
<div class="a" style="left:927.8px;top:369.52px;width:71.0px;height:18.3px;background:#fff;border:1px solid #e5e7ee;border-radius:2px;font-size:10.2px;line-height:17.8px;padding-left:3.5px;color:#111">INT</div>
<div class="a" style="left:1002.0px;top:369.52px;width:48.5px;height:18.3px;background:#fff;border:1px solid #e5e7ee;border-radius:2px;font-size:10.2px;line-height:17.8px;padding-left:3.5px;color:#111"></div>
<div class="a" style="left:1054.5px;top:369.52px;width:70.5px;height:18.3px;background:#fff;border:1px solid #e5e7ee;border-radius:2px;font-size:10.2px;line-height:17.8px;padding-left:3.5px;color:#111"></div>
<div class="a" style="left:1129.0px;top:369.52px;width:97.0px;height:18.3px;background:#fff;border:1px solid #e5e7ee;border-radius:2px;font-size:10.2px;line-height:17.8px;padding-left:3.5px;color:#111"></div>
<div class="a" style="left:272.3px;top:394.55px;width:20px;text-align:center;font-size:11px;line-height:13px;color:#3a3a3a">6</div>
<svg class="a" style="left:293px;top:396.25px" width="11" height="8" viewBox="0 0 11 8"><path d="M0.6 4 Q5.5 -1.9 10.4 4 Q5.5 9.9 0.6 4 Z" fill="none" stroke="#333" stroke-width="1.15"/><circle cx="5.5" cy="4" r="1.9" fill="#333"/></svg>
<div class="a" style="left:308.0px;top:391.85px;width:145.3px;height:18.3px;background:#eeeff1;border:1px solid #e2e4ea;border-radius:2px;font-size:10.2px;line-height:17.8px;padding-left:3.5px;color:#111">STUDENT_NUMBER</div>
<div class="a" style="left:457.0px;top:391.85px;width:145.0px;height:18.3px;background:#eeeff1;border:1px solid #e2e4ea;border-radius:2px;font-size:10.2px;line-height:17.8px;padding-left:3.5px;color:#111">学生人数</div>
<div class="a" style="left:609.0px;top:395.95px;width:9px;height:9px;border:1px solid #a3a6b4;border-radius:2px;background:transparent"></div>
<div class="a" style="left:660.6px;top:395.95px;width:9px;height:9px;border:1px solid #a3a6b4;border-radius:2px;background:transparent"></div>
<div class="a" style="left:728.0px;top:395.95px;width:9px;height:9px;border:1px solid #a3a6b4;border-radius:2px;background:transparent"></div>
<div class="a" style="left:927.8px;top:391.85px;width:71.0px;height:18.3px;background:#eeeff1;border:1px solid #e2e4ea;border-radius:2px;font-size:10.2px;line-height:17.8px;padding-left:3.5px;color:#111">INT</div>
<div class="a" style="left:1002.0px;top:391.85px;width:48.5px;height:18.3px;background:#eeeff1;border:1px solid #e2e4ea;border-radius:2px;font-size:10.2px;line-height:17.8px;padding-left:3.5px;color:#111"></div>
<div class="a" style="left:1054.5px;top:391.85px;width:70.5px;height:18.3px;background:#eeeff1;border:1px solid #e2e4ea;border-radius:2px;font-size:10.2px;line-height:17.8px;padding-left:3.5px;color:#111"></div>
<div class="a" style="left:1129.0px;top:391.85px;width:97.0px;height:18.3px;background:#eeeff1;border:1px solid #e2e4ea;border-radius:2px;font-size:10.2px;line-height:17.8px;padding-left:3.5px;color:#111"></div>
<div class="a" style="left:272.3px;top:416.88px;width:20px;text-align:center;font-size:11px;line-height:13px;color:#3a3a3a">7</div>
<svg class="a" style="left:293px;top:418.58px" width="11" height="8" viewBox="0 0 11 8"><path d="M0.6 4 Q5.5 -1.9 10.4 4 Q5.5 9.9 0.6 4 Z" fill="none" stroke="#333" stroke-width="1.15"/><circle cx="5.5" cy="4" r="1.9" fill="#333"/></svg>
<div class="a" style="left:308.0px;top:414.18px;width:145.3px;height:18.3px;background:#fff;border:1px solid #e5e7ee;border-radius:2px;font-size:10.2px;line-height:17.8px;padding-left:3.5px;color:#111">PRESIDENT</div>
<div class="a" style="left:457.0px;top:414.18px;width:145.0px;height:18.3px;background:#fff;border:1px solid #e5e7ee;border-radius:2px;font-size:10.2px;line-height:17.8px;padding-left:3.5px;color:#111">院长</div>
<div class="a" style="left:609.0px;top:418.28px;width:9px;height:9px;border:1px solid #a3a6b4;border-radius:2px;background:transparent"></div>
<div class="a" style="left:660.6px;top:418.28px;width:9px;height:9px;border:1px solid #a3a6b4;border-radius:2px;background:transparent"></div>
<div class="a" style="left:728.0px;top:418.28px;width:9px;height:9px;border:1px solid #a3a6b4;border-radius:2px;background:transparent"></div>
<div class="a" style="left:927.8px;top:414.18px;width:71.0px;height:18.3px;background:#fff;border:1px solid #e5e7ee;border-radius:2px;font-size:10.2px;line-height:17.8px;padding-left:3.5px;color:#111">VARCHAR</div>
<div class="a" style="left:1002.0px;top:414.18px;width:48.5px;height:18.3px;background:#fff;border:1px solid #e5e7ee;border-radius:2px;font-size:10.2px;line-height:17.8px;padding-left:3.5px;color:#111">90</div>
<div class="a" style="left:1054.5px;top:414.18px;width:70.5px;height:18.3px;background:#fff;border:1px solid #e5e7ee;border-radius:2px;font-size:10.2px;line-height:17.8px;padding-left:3.5px;color:#111"></div>
<div class="a" style="left:1129.0px;top:414.18px;width:97.0px;height:18.3px;background:#fff;border:1px solid #e5e7ee;border-radius:2px;font-size:10.2px;line-height:17.8px;padding-left:3.5px;color:#111"></div>
<div class="a" style="left:272.3px;top:439.21px;width:20px;text-align:center;font-size:11px;line-height:13px;color:#3a3a3a">8</div>
<svg class="a" style="left:293px;top:442.01px" width="11" height="8" viewBox="0 0 11 8"><path d="M3.9 6.8 Q2 6.1 0.6 4 Q5.5 -1.9 7.6 1.5" fill="none" stroke="#333" stroke-width="1.15"/><path d="M8.3 2.2 Q9.5 2.9 10.4 4 Q7.5 7.6 4.9 7.1" fill="none" stroke="#555" stroke-width="1"/><path d="M3.6 4 C3.6 3 4.4 2.1 5.5 2.1 C5.9 2.1 6.2 2.2 6.5 2.3 L4.3 5.6 C3.9 5.2 3.6 4.6 3.6 4 Z" fill="#333"/><path d="M7.4 3.6 C7.5 4.9 6.6 5.9 5.6 5.9" fill="none" stroke="#555" stroke-width="0.9"/><path d="M8.5 0.2 L3.5 7.8" stroke="#333" stroke-width="1.3"/></svg>
<div class="a" style="left:308.0px;top:436.51px;width:145.3px;height:18.3px;background:#eeeff1;border:1px solid #e2e4ea;border-radius:2px;font-size:10.2px;line-height:17.8px;padding-left:3.5px;color:#111">TENANT_ID</div>
<div class="a" style="left:457.0px;top:436.51px;width:145.0px;height:18.3px;background:#eeeff1;border:1px solid #e2e4ea;border-radius:2px;font-size:10.2px;line-height:17.8px;padding-left:3.5px;color:#111">租户号</div>
<div class="a" style="left:609.0px;top:440.61px;width:9px;height:9px;border:1px solid #a3a6b4;border-radius:2px;background:transparent"></div>
<div class="a" style="left:660.6px;top:440.61px;width:9px;height:9px;border:1px solid #a3a6b4;border-radius:2px;background:transparent"></div>
<div class="a" style="left:728.0px;top:440.61px;width:9px;height:9px;border:1px solid #a3a6b4;border-radius:2px;background:transparent"></div>
<div class="a" style="left:927.8px;top:436.51px;width:71.0px;height:18.3px;background:#eeeff1;border:1px solid #e2e4ea;border-radius:2px;font-size:10.2px;line-height:17.8px;padding-left:3.5px;color:#111">VARCHAR</div>
<div class="a" style="left:1002.0px;top:436.51px;width:48.5px;height:18.3px;background:#eeeff1;border:1px solid #e2e4ea;border-radius:2px;font-size:10.2px;line-height:17.8px;padding-left:3.5px;color:#111">32</div>
<div class="a" style="left:1054.5px;top:436.51px;width:70.5px;height:18.3px;background:#eeeff1;border:1px solid #e2e4ea;border-radius:2px;font-size:10.2px;line-height:17.8px;padding-left:3.5px;color:#111"></div>
<div class="a" style="left:1129.0px;top:436.51px;width:97.0px;height:18.3px;background:#eeeff1;border:1px solid #e2e4ea;border-radius:2px;font-size:10.2px;line-height:17.8px;padding-left:3.5px;color:#111"></div>
<div class="a" style="left:272.3px;top:461.54px;width:20px;text-align:center;font-size:11px;line-height:13px;color:#3a3a3a">9</div>
<svg class="a" style="left:293px;top:464.34px" width="11" height="8" viewBox="0 0 11 8"><path d="M3.9 6.8 Q2 6.1 0.6 4 Q5.5 -1.9 7.6 1.5" fill="none" stroke="#333" stroke-width="1.15"/><path d="M8.3 2.2 Q9.5 2.9 10.4 4 Q7.5 7.6 4.9 7.1" fill="none" stroke="#555" stroke-width="1"/><path d="M3.6 4 C3.6 3 4.4 2.1 5.5 2.1 C5.9 2.1 6.2 2.2 6.5 2.3 L4.3 5.6 C3.9 5.2 3.6 4.6 3.6 4 Z" fill="#333"/><path d="M7.4 3.6 C7.5 4.9 6.6 5.9 5.6 5.9" fill="none" stroke="#555" stroke-width="0.9"/><path d="M8.5 0.2 L3.5 7.8" stroke="#333" stroke-width="1.3"/></svg>
<div class="a" style="left:308.0px;top:458.84px;width:145.3px;height:18.3px;background:#fff;border:1px solid #e5e7ee;border-radius:2px;font-size:10.2px;line-height:17.8px;padding-left:3.5px;color:#111">REVISION</div>
<div class="a" style="left:457.0px;top:458.84px;width:145.0px;height:18.3px;background:#fff;border:1px solid #e5e7ee;border-radius:2px;font-size:10.2px;line-height:17.8px;padding-left:3.5px;color:#111">乐观锁</div>
<div class="a" style="left:609.0px;top:462.94px;width:9px;height:9px;border:1px solid #a3a6b4;border-radius:2px;background:transparent"></div>
<div class="a" style="left:660.6px;top:462.94px;width:9px;height:9px;border:1px solid #a3a6b4;border-radius:2px;background:transparent"></div>
<div class="a" style="left:728.0px;top:462.94px;width:9px;height:9px;border:1px solid #a3a6b4;border-radius:2px;background:transparent"></div>
<div class="a" style="left:927.8px;top:458.84px;width:71.0px;height:18.3px;background:#fff;border:1px solid #e5e7ee;border-radius:2px;font-size:10.2px;line-height:17.8px;padding-left:3.5px;color:#111">INT</div>
<div class="a" style="left:1002.0px;top:458.84px;width:48.5px;height:18.3px;background:#fff;border:1px solid #e5e7ee;border-radius:2px;font-size:10.2px;line-height:17.8px;padding-left:3.5px;color:#111"></div>
<div class="a" style="left:1054.5px;top:458.84px;width:70.5px;height:18.3px;background:#fff;border:1px solid #e5e7ee;border-radius:2px;font-size:10.2px;line-height:17.8px;padding-left:3.5px;color:#111"></div>
<div class="a" style="left:1129.0px;top:458.84px;width:97.0px;height:18.3px;background:#fff;border:1px solid #e5e7ee;border-radius:2px;font-size:10.2px;line-height:17.8px;padding-left:3.5px;color:#111"></div>
<div class="a" style="left:272.3px;top:483.87px;width:20px;text-align:center;font-size:11px;line-height:13px;color:#3a3a3a">10</div>
<svg class="a" style="left:293px;top:486.67px" width="11" height="8" viewBox="0 0 11 8"><path d="M3.9 6.8 Q2 6.1 0.6 4 Q5.5 -1.9 7.6 1.5" fill="none" stroke="#333" stroke-width="1.15"/><path d="M8.3 2.2 Q9.5 2.9 10.4 4 Q7.5 7.6 4.9 7.1" fill="none" stroke="#555" stroke-width="1"/><path d="M3.6 4 C3.6 3 4.4 2.1 5.5 2.1 C5.9 2.1 6.2 2.2 6.5 2.3 L4.3 5.6 C3.9 5.2 3.6 4.6 3.6 4 Z" fill="#333"/><path d="M7.4 3.6 C7.5 4.9 6.6 5.9 5.6 5.9" fill="none" stroke="#555" stroke-width="0.9"/><path d="M8.5 0.2 L3.5 7.8" stroke="#333" stroke-width="1.3"/></svg>
<div class="a" style="left:308.0px;top:481.17px;width:145.3px;height:18.3px;background:#eeeff1;border:1px solid #e2e4ea;border-radius:2px;font-size:10.2px;line-height:17.8px;padding-left:3.5px;color:#111">CREATED_BY</div>
<div class="a" style="left:457.0px;top:481.17px;width:145.0px;height:18.3px;background:#eeeff1;border:1px solid #e2e4ea;border-radius:2px;font-size:10.2px;line-height:17.8px;padding-left:3.5px;color:#111">创建人</div>
<div class="a" style="left:609.0px;top:485.27px;width:9px;height:9px;border:1px solid #a3a6b4;border-radius:2px;background:transparent"></div>
<div class="a" style="left:660.6px;top:485.27px;width:9px;height:9px;border:1px solid #a3a6b4;border-radius:2px;background:transparent"></div>
<div class="a" style="left:728.0px;top:485.27px;width:9px;height:9px;border:1px solid #a3a6b4;border-radius:2px;background:transparent"></div>
<div class="a" style="left:927.8px;top:481.17px;width:71.0px;height:18.3px;background:#eeeff1;border:1px solid #e2e4ea;border-radius:2px;font-size:10.2px;line-height:17.8px;padding-left:3.5px;color:#111">VARCHAR</div>
<div class="a" style="left:1002.0px;top:481.17px;width:48.5px;height:18.3px;background:#eeeff1;border:1px solid #e2e4ea;border-radius:2px;font-size:10.2px;line-height:17.8px;padding-left:3.5px;color:#111">32</div>
<div class="a" style="left:1054.5px;top:481.17px;width:70.5px;height:18.3px;background:#eeeff1;border:1px solid #e2e4ea;border-radius:2px;font-size:10.2px;line-height:17.8px;padding-left:3.5px;color:#111"></div>
<div class="a" style="left:1129.0px;top:481.17px;width:97.0px;height:18.3px;background:#eeeff1;border:1px solid #e2e4ea;border-radius:2px;font-size:10.2px;line-height:17.8px;padding-left:3.5px;color:#111"></div>
<div class="a" style="left:272.3px;top:506.20px;width:20px;text-align:center;font-size:11px;line-height:13px;color:#3a3a3a">11</div>
<svg class="a" style="left:293px;top:509.00px" width="11" height="8" viewBox="0 0 11 8"><path d="M3.9 6.8 Q2 6.1 0.6 4 Q5.5 -1.9 7.6 1.5" fill="none" stroke="#333" stroke-width="1.15"/><path d="M8.3 2.2 Q9.5 2.9 10.4 4 Q7.5 7.6 4.9 7.1" fill="none" stroke="#555" stroke-width="1"/><path d="M3.6 4 C3.6 3 4.4 2.1 5.5 2.1 C5.9 2.1 6.2 2.2 6.5 2.3 L4.3 5.6 C3.9 5.2 3.6 4.6 3.6 4 Z" fill="#333"/><path d="M7.4 3.6 C7.5 4.9 6.6 5.9 5.6 5.9" fill="none" stroke="#555" stroke-width="0.9"/><path d="M8.5 0.2 L3.5 7.8" stroke="#333" stroke-width="1.3"/></svg>
<div class="a" style="left:308.0px;top:503.50px;width:145.3px;height:18.3px;background:#fff;border:1px solid #e5e7ee;border-radius:2px;font-size:10.2px;line-height:17.8px;padding-left:3.5px;color:#111">CREATED_TIME</div>
<div class="a" style="left:457.0px;top:503.50px;width:145.0px;height:18.3px;background:#fff;border:1px solid #e5e7ee;border-radius:2px;font-size:10.2px;line-height:17.8px;padding-left:3.5px;color:#111">创建时间</div>
<div class="a" style="left:609.0px;top:507.60px;width:9px;height:9px;border:1px solid #a3a6b4;border-radius:2px;background:transparent"></div>
<div class="a" style="left:660.6px;top:507.60px;width:9px;height:9px;border:1px solid #a3a6b4;border-radius:2px;background:transparent"></div>
<div class="a" style="left:728.0px;top:507.60px;width:9px;height:9px;border:1px solid #a3a6b4;border-radius:2px;background:transparent"></div>
<div class="a" style="left:927.8px;top:503.50px;width:71.0px;height:18.3px;background:#fff;border:1px solid #e5e7ee;border-radius:2px;font-size:10.2px;line-height:17.8px;padding-left:3.5px;color:#111">DATETIME</div>
<div class="a" style="left:1002.0px;top:503.50px;width:48.5px;height:18.3px;background:#fff;border:1px solid #e5e7ee;border-radius:2px;font-size:10.2px;line-height:17.8px;padding-left:3.5px;color:#111"></div>
<div class="a" style="left:1054.5px;top:503.50px;width:70.5px;height:18.3px;background:#fff;border:1px solid #e5e7ee;border-radius:2px;font-size:10.2px;line-height:17.8px;padding-left:3.5px;color:#111"></div>
<div class="a" style="left:1129.0px;top:503.50px;width:97.0px;height:18.3px;background:#fff;border:1px solid #e5e7ee;border-radius:2px;font-size:10.2px;line-height:17.8px;padding-left:3.5px;color:#111"></div>
<div class="a" style="left:272.3px;top:528.53px;width:20px;text-align:center;font-size:11px;line-height:13px;color:#3a3a3a">12</div>
<svg class="a" style="left:293px;top:531.33px" width="11" height="8" viewBox="0 0 11 8"><path d="M3.9 6.8 Q2 6.1 0.6 4 Q5.5 -1.9 7.6 1.5" fill="none" stroke="#333" stroke-width="1.15"/><path d="M8.3 2.2 Q9.5 2.9 10.4 4 Q7.5 7.6 4.9 7.1" fill="none" stroke="#555" stroke-width="1"/><path d="M3.6 4 C3.6 3 4.4 2.1 5.5 2.1 C5.9 2.1 6.2 2.2 6.5 2.3 L4.3 5.6 C3.9 5.2 3.6 4.6 3.6 4 Z" fill="#333"/><path d="M7.4 3.6 C7.5 4.9 6.6 5.9 5.6 5.9" fill="none" stroke="#555" stroke-width="0.9"/><path d="M8.5 0.2 L3.5 7.8" stroke="#333" stroke-width="1.3"/></svg>
<div class="a" style="left:308.0px;top:525.83px;width:145.3px;height:18.3px;background:#eeeff1;border:1px solid #e2e4ea;border-radius:2px;font-size:10.2px;line-height:17.8px;padding-left:3.5px;color:#111">UPDATED_BY</div>
<div class="a" style="left:457.0px;top:525.83px;width:145.0px;height:18.3px;background:#eeeff1;border:1px solid #e2e4ea;border-radius:2px;font-size:10.2px;line-height:17.8px;padding-left:3.5px;color:#111">更新人</div>
<div class="a" style="left:609.0px;top:529.93px;width:9px;height:9px;border:1px solid #a3a6b4;border-radius:2px;background:transparent"></div>
<div class="a" style="left:660.6px;top:529.93px;width:9px;height:9px;border:1px solid #a3a6b4;border-radius:2px;background:transparent"></div>
<div class="a" style="left:728.0px;top:529.93px;width:9px;height:9px;border:1px solid #a3a6b4;border-radius:2px;background:transparent"></div>
<div class="a" style="left:927.8px;top:525.83px;width:71.0px;height:18.3px;background:#eeeff1;border:1px solid #e2e4ea;border-radius:2px;font-size:10.2px;line-height:17.8px;padding-left:3.5px;color:#111">VARCHAR</div>
<div class="a" style="left:1002.0px;top:525.83px;width:48.5px;height:18.3px;background:#eeeff1;border:1px solid #e2e4ea;border-radius:2px;font-size:10.2px;line-height:17.8px;padding-left:3.5px;color:#111">32</div>
<div class="a" style="left:1054.5px;top:525.83px;width:70.5px;height:18.3px;background:#eeeff1;border:1px solid #e2e4ea;border-radius:2px;font-size:10.2px;line-height:17.8px;padding-left:3.5px;color:#111"></div>
<div class="a" style="left:1129.0px;top:525.83px;width:97.0px;height:18.3px;background:#eeeff1;border:1px solid #e2e4ea;border-radius:2px;font-size:10.2px;line-height:17.8px;padding-left:3.5px;color:#111"></div>
<div class="a" style="left:272.3px;top:550.86px;width:20px;text-align:center;font-size:11px;line-height:13px;color:#3a3a3a">13</div>
<svg class="a" style="left:293px;top:553.66px" width="11" height="8" viewBox="0 0 11 8"><path d="M3.9 6.8 Q2 6.1 0.6 4 Q5.5 -1.9 7.6 1.5" fill="none" stroke="#333" stroke-width="1.15"/><path d="M8.3 2.2 Q9.5 2.9 10.4 4 Q7.5 7.6 4.9 7.1" fill="none" stroke="#555" stroke-width="1"/><path d="M3.6 4 C3.6 3 4.4 2.1 5.5 2.1 C5.9 2.1 6.2 2.2 6.5 2.3 L4.3 5.6 C3.9 5.2 3.6 4.6 3.6 4 Z" fill="#333"/><path d="M7.4 3.6 C7.5 4.9 6.6 5.9 5.6 5.9" fill="none" stroke="#555" stroke-width="0.9"/><path d="M8.5 0.2 L3.5 7.8" stroke="#333" stroke-width="1.3"/></svg>
<div class="a" style="left:308.0px;top:548.16px;width:145.3px;height:18.3px;background:#fff;border:1px solid #e5e7ee;border-radius:2px;font-size:10.2px;line-height:17.8px;padding-left:3.5px;color:#111">UPDATED_TIME</div>
<div class="a" style="left:457.0px;top:548.16px;width:145.0px;height:18.3px;background:#fff;border:1px solid #e5e7ee;border-radius:2px;font-size:10.2px;line-height:17.8px;padding-left:3.5px;color:#111">更新时间</div>
<div class="a" style="left:609.0px;top:552.26px;width:9px;height:9px;border:1px solid #a3a6b4;border-radius:2px;background:transparent"></div>
<div class="a" style="left:660.6px;top:552.26px;width:9px;height:9px;border:1px solid #a3a6b4;border-radius:2px;background:transparent"></div>
<div class="a" style="left:728.0px;top:552.26px;width:9px;height:9px;border:1px solid #a3a6b4;border-radius:2px;background:transparent"></div>
<div class="a" style="left:927.8px;top:548.16px;width:71.0px;height:18.3px;background:#fff;border:1px solid #e5e7ee;border-radius:2px;font-size:10.2px;line-height:17.8px;padding-left:3.5px;color:#111">DATETIME</div>
<div class="a" style="left:1002.0px;top:548.16px;width:48.5px;height:18.3px;background:#fff;border:1px solid #e5e7ee;border-radius:2px;font-size:10.2px;line-height:17.8px;padding-left:3.5px;color:#111"></div>
<div class="a" style="left:1054.5px;top:548.16px;width:70.5px;height:18.3px;background:#fff;border:1px solid #e5e7ee;border-radius:2px;font-size:10.2px;line-height:17.8px;padding-left:3.5px;color:#111"></div>
<div class="a" style="left:1129.0px;top:548.16px;width:97.0px;height:18.3px;background:#fff;border:1px solid #e5e7ee;border-radius:2px;font-size:10.2px;line-height:17.8px;padding-left:3.5px;color:#111"></div>
<div class="a" style="left:1220.5px;top:260.00px;width:9.3px;height:313.59px;background:#fff"></div>
<div class="a" style="left:1223px;top:262px;width:2.6px;height:298px;border-radius:2px;background:#d5d8e0"></div>
<div class="a" style="left:269px;top:565px;width:952px;height:8px;background:#fff"></div>
<div class="a" style="left:272px;top:567.2px;width:628px;height:3.3px;border-radius:2px;background:#d8dbe3"></div>
<div class="a" style="left:776.3px;top:346.4px;width:148.5px;height:5px;background:#e8eaef;border-top:1px solid #dfe2ea"></div>
<div class="a" style="left:776.8px;top:350.5px;width:147.5px;height:254.5px;background:#fff;box-shadow:0 1px 6px rgba(40,50,90,0.22),0 0 1px rgba(40,50,90,0.25)"></div>
<div class="a" style="left:781px;top:357.0px;font-size:10px;letter-spacing:0.6px;line-height:13px;color:#505050"><span style="letter-spacing:1.8px">---</span>请选择<span style="letter-spacing:1.8px">---</span></div>
<div class="a" style="left:781px;top:380.0px;font-size:10px;letter-spacing:0.6px;line-height:13px;color:#505050">默认字串</div>
<div class="a" style="left:781px;top:403.0px;font-size:10px;letter-spacing:0.6px;line-height:13px;color:#505050">主键标识</div>
<div class="a" style="left:781px;top:426.0px;font-size:10px;letter-spacing:0.6px;line-height:13px;color:#505050">名称</div>
<div class="a" style="left:781px;top:449.0px;font-size:10px;letter-spacing:0.6px;line-height:13px;color:#505050">整数</div>
<div class="a" style="left:781px;top:472.0px;font-size:10px;letter-spacing:0.6px;line-height:13px;color:#505050">小数</div>
<div class="a" style="left:781px;top:495.0px;font-size:10px;letter-spacing:0.6px;line-height:13px;color:#505050">金额</div>
<div class="a" style="left:781px;top:518.0px;font-size:10px;letter-spacing:0.6px;line-height:13px;color:#505050">日期时间</div>
<div class="a" style="left:781px;top:541.0px;font-size:10px;letter-spacing:0.6px;line-height:13px;color:#505050">是否</div>
<div class="a" style="left:781px;top:564.0px;font-size:10px;letter-spacing:0.6px;line-height:13px;color:#505050">数据字典</div>
<div class="a" style="left:781px;top:587.0px;font-size:10px;letter-spacing:0.6px;line-height:13px;color:#505050">描述文本</div>
<svg class="a" style="left:910.5px;top:428.5px" width="10" height="8" viewBox="0 0 10 8"><path d="M1 4.2 L3.7 6.8 L9 1.2" fill="none" stroke="#3b4350" stroke-width="1.8"/></svg>
<div class="a" style="left:1217px;top:137.4px;width:19px;height:58.3px;border-radius:9.5px;background:#7b8ff2;box-shadow:-3px 0 8px rgba(255,255,255,0.9)"></div>
<svg class="a" style="left:1221.5px;top:145px" width="10" height="10" viewBox="0 0 10 10"><path d="M1 1.5 C1 1 1.3 0.7 1.8 0.7 H8.2 C8.7 0.7 9 1 9 1.5 V8.5 C9 9 8.7 9.3 8.2 9.3 H1.8 C1.3 9.3 1 9 1 8.5 Z M1 5 H3.5 C3.5 6 4.1 6.6 5 6.6 C5.9 6.6 6.5 6 6.5 5 H9 M3 3 H7" fill="none" stroke="#fff" stroke-width="0.9"/></svg>
<div class="a" style="left:1222px;top:156px;width:10px;font-size:9px;line-height:10.5px;color:#fff;white-space:normal">字段库</div>
<svg class="a" style="left:0;top:0" width="1280" height="689" viewBox="0 0 1280 689"><path d="M1116 240.5 L1032 323.5" stroke="#d4040f" stroke-width="3" stroke-linecap="round"/><path d="M1024.2 332 L1027 317.6 L1038.6 327.2 Z" fill="#d4040f"/><path d="M552 333.6 L761.5 419.6" stroke="#d4040f" stroke-width="3" stroke-linecap="round"/><path d="M772.4 424.6 L756.8 424.7 L761.6 413.8 Z" fill="#d4040f"/></svg>
<!--/MAIN-->
</div>
</body></html>
